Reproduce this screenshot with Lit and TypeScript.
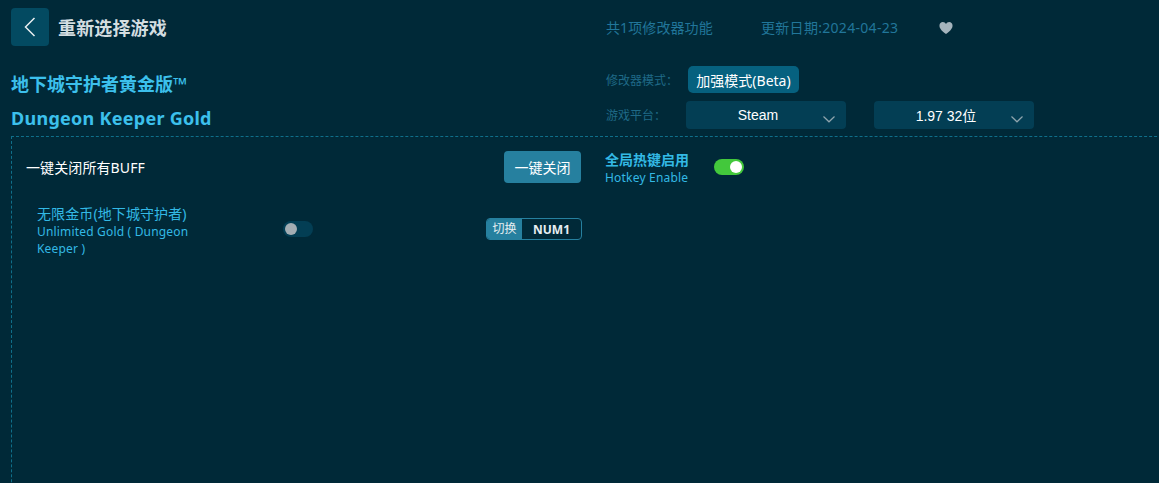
import { LitElement, html, css } from "lit";
import { customElement } from "lit/decorators.js";

const chevron = html`<svg class="chev" width="14" height="8" viewBox="0 0 14 8" fill="none" stroke="#8fa5ae" stroke-width="1.2"><path d="M1.5 1.5 L7 6.8 L12.5 1.5"/></svg>`;

@customElement("app-root")
export class AppRoot extends LitElement {
  static styles = css`
    :host {
      display: block;
      width: 1159px;
      height: 483px;
      overflow: hidden;
      background: #002938;
      font-family: "Microsoft YaHei", "Noto Sans", "Noto Sans CJK SC", sans-serif;
      box-sizing: border-box;
    }
    .top {
      display: grid;
      grid-template-columns: 595px 1fr;
      padding: 8px 0 0 11px;
      height: 128px;
      box-sizing: content-box;
    }
    .left-head { display: flex; flex-direction: column; }
    .back-row { display: flex; align-items: center; gap: 9px; height: 38px; }
    .back {
      width: 38px; height: 38px; border-radius: 4px; background: #034a61;
      display: flex; align-items: center; justify-content: center;
    }
    .title { font-size: 18px; font-weight: 700; color: #d3dde0; letter-spacing: 0.15px; }
    .game { font-size: 18px; font-weight: 700; color: #3cc0ec; line-height: 24px; }
    .game.cn { margin-top: 26px; }
    .game.en { margin-top: 10px; letter-spacing: 0.27px; }
    .right-head { display: flex; flex-direction: column; }
    .stats { display: flex; align-items: center; height: 38px; font-size: 14px; color: #21769a; }
    .stats .count { width: 155px; letter-spacing: 0.1px; }
    .stats .date { width: 178px; letter-spacing: 0.3px; }
    .heart { margin-top: 2px; }
    .mode-row { display: flex; align-items: center; margin-top: 20px; height: 27px; }
    .label { font-size: 12px; color: #1f6a87; width: 82px; }
    .mode-btn {
      height: 27px; width: 111px; border-radius: 5px; background: #06617f; color: #fff;
      font-size: 14px; display: flex; align-items: center; justify-content: center;
    }
    .plat-row { display: flex; align-items: center; margin-top: 8px; height: 28px; }
    .plat-row .label { width: 80px; }
    .select {
      width: 160px; height: 28px; border-radius: 4px; background: #033e54; color: #fff;
      font-size: 14px; font-family: "Liberation Sans", "Noto Sans CJK SC", sans-serif;
      display: flex; align-items: center; justify-content: center;
      position: relative; padding-right: 16px; box-sizing: border-box;
    }
    .select + .select { margin-left: 28px; }
    .chev { position: absolute; right: 10px; top: 14px; }
    .panel {
      margin-left: 11px; width: 1200px; height: 400px;
      border: 1px dashed #0f6f8a; border-right: none; border-bottom: none;
      display: grid; grid-template-columns: 593px 1fr;
    }
    .col { display: flex; flex-direction: column; }
    .all-row {
      display: flex; align-items: center; justify-content: space-between;
      padding: 14px 0 0 14px; height: 32px; box-sizing: content-box;
    }
    .all-label { font-size: 14px; color: #fff; letter-spacing: 0.1px; }
    .all-btn {
      width: 77px; height: 32px; border-radius: 4px; background: #26809f; color: #fff;
      font-size: 14px; display: flex; align-items: center; justify-content: center;
      margin-right: 24px;
    }
    .item { display: flex; padding: 22px 0 0 25px; }
    .item-text { width: 160px; color: #33b9e5; }
    .item-cn { font-size: 14px; line-height: 18px; letter-spacing: 0.1px; }
    .item-en { font-size: 12px; line-height: 17px; letter-spacing: 0.18px; }
    .switch {
      width: 30px; height: 16px; border-radius: 8px; position: relative; flex: none;
    }
    .switch::after {
      content: ""; position: absolute; top: 2px; width: 12px; height: 12px; border-radius: 50%;
    }
    .switch.off { background: #033e54; margin: 16px 0 0 86px; }
    .switch.off::after { left: 2px; background: #a3adb3; }
    .switch.on { background: #43c83c; margin: 0 0 0 25px; }
    .switch.on::after { right: 2px; background: #fff; }
    .key {
      display: flex; height: 22px; width: 96px; margin: 13px 0 0 173px; flex: none;
      border: 1px solid #26809f; border-radius: 4px; box-sizing: border-box; overflow: hidden;
      font-size: 12px; align-items: stretch;
    }
    .key-a { width: 35px; background: #26809f; color: #e6eef1; display: flex; align-items: center; justify-content: center; padding-bottom: 2px; box-sizing: border-box; }
    .key-b { flex: 1; color: #e6eef1; font-weight: 700; display: flex; align-items: center; justify-content: center; }
    .hot { display: flex; align-items: center; padding-top: 14px; height: 32px; box-sizing: content-box; }
    .hot-text { color: #33b9e5; width: 84px; padding-top: 4px; }
    .hot-cn { font-size: 14px; font-weight: 700; line-height: 18px; }
    .hot-en { font-size: 12px; line-height: 18px; letter-spacing: 0.2px; }
  `;

  render() {
    return html`
      <div class="top">
        <div class="left-head">
          <div class="back-row">
            <div class="back">
              <svg width="12" height="20" viewBox="0 0 12 20" fill="none" stroke="#e8eef0" stroke-width="1.5"><path d="M10.5 1 L1.5 10 L10.5 19"/></svg>
            </div>
            <div class="title">重新选择游戏</div>
          </div>
          <div class="game cn">地下城守护者黄金版™</div>
          <div class="game en">Dungeon Keeper Gold</div>
        </div>
        <div class="right-head">
          <div class="stats">
            <div class="count">共1项修改器功能</div>
            <div class="date">更新日期:2024-04-23</div>
            <svg class="heart" width="14" height="14" viewBox="0 0 15 14" fill="#a5b4bd"><path d="M7.5 13.5 C2 9.5 .5 7 .5 4.3 C.5 2 2.2 .5 4.1 .5 C5.5 .5 6.8 1.3 7.5 2.6 C8.2 1.3 9.5 .5 10.9 .5 C12.8 .5 14.5 2 14.5 4.3 C14.5 7 13 9.5 7.5 13.5 Z"/></svg>
          </div>
          <div class="mode-row">
            <div class="label">修改器模式：</div>
            <div class="mode-btn">加强模式(Beta)</div>
          </div>
          <div class="plat-row">
            <div class="label">游戏平台：</div>
            <div class="select">Steam${chevron}</div>
            <div class="select">1.97 32位${chevron}</div>
          </div>
        </div>
      </div>
      <div class="panel">
        <div class="col">
          <div class="all-row">
            <div class="all-label">一键关闭所有BUFF</div>
            <div class="all-btn">一键关闭</div>
          </div>
          <div class="item">
            <div class="item-text">
              <div class="item-cn">无限金币(地下城守护者)</div>
              <div class="item-en">Unlimited Gold ( Dungeon Keeper )</div>
            </div>
            <div class="switch off"></div>
            <div class="key"><div class="key-a">切换</div><div class="key-b">NUM1</div></div>
          </div>
        </div>
        <div class="col">
          <div class="hot">
            <div class="hot-text">
              <div class="hot-cn">全局热键启用</div>
              <div class="hot-en">Hotkey Enable</div>
            </div>
            <div class="switch on"></div>
          </div>
        </div>
      </div>
    `;
  }
}
